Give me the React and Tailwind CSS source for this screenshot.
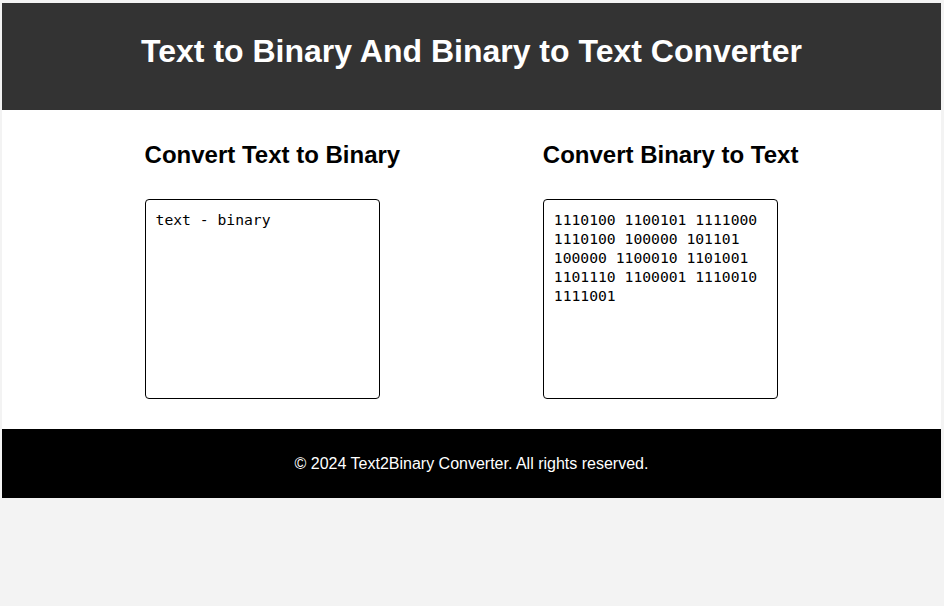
import React, { useState } from 'react';

const toBinary = (str) =>
  str
    .split('')
    .map((c) => c.charCodeAt(0).toString(2))
    .join(' ');

export default function App() {
  const [text] = useState('text - binary');
  const binary = toBinary(text);

  return (
    <div
      className="min-h-[606px] bg-[#f3f3f3] pt-[3px] pl-[2px] pr-[3px]"
      style={{ fontFamily: '"Liberation Sans", Arial, sans-serif' }}
    >
      {/* Header */}
      <header className="bg-[#333333] h-[107px] pt-[30px]">
        <h1 className="text-center text-white font-bold text-[32px] leading-[37px]">
          Text to Binary And Binary to Text Converter
        </h1>
      </header>

      {/* Converters */}
      <main className="bg-white flex justify-evenly pt-[31px] pb-[30px]">
        <section className="flex flex-col">
          <h2 className="text-[24px] font-bold leading-[28px] text-black mb-[30px]">
            Convert Text to Binary
          </h2>
          <textarea
            defaultValue={text}
            className="w-[235px] h-[200px] border border-black rounded-[4px] pt-[10px] pb-[9px] pl-[10px] pr-[8px] resize-none text-[14.7px] leading-[19px] text-black outline-none"
            style={{ fontFamily: '"DejaVu Sans Mono", Consolas, monospace' }}
          />
        </section>
        <section className="flex flex-col">
          <h2 className="text-[24px] font-bold leading-[28px] text-black mb-[30px]">
            Convert Binary to Text
          </h2>
          <textarea
            defaultValue={binary}
            className="w-[235px] h-[200px] border border-black rounded-[4px] pt-[10px] pb-[9px] pl-[10px] pr-[8px] resize-none text-[14.7px] leading-[19px] text-black outline-none"
            style={{ fontFamily: '"DejaVu Sans Mono", Consolas, monospace' }}
          />
        </section>
      </main>

      {/* Footer */}
      <footer className="bg-black h-[69px] pt-[26px] text-center text-white text-[16px] leading-[18px]">
        © 2024 Text2Binary Converter. All rights reserved.
      </footer>
    </div>
  );
}
